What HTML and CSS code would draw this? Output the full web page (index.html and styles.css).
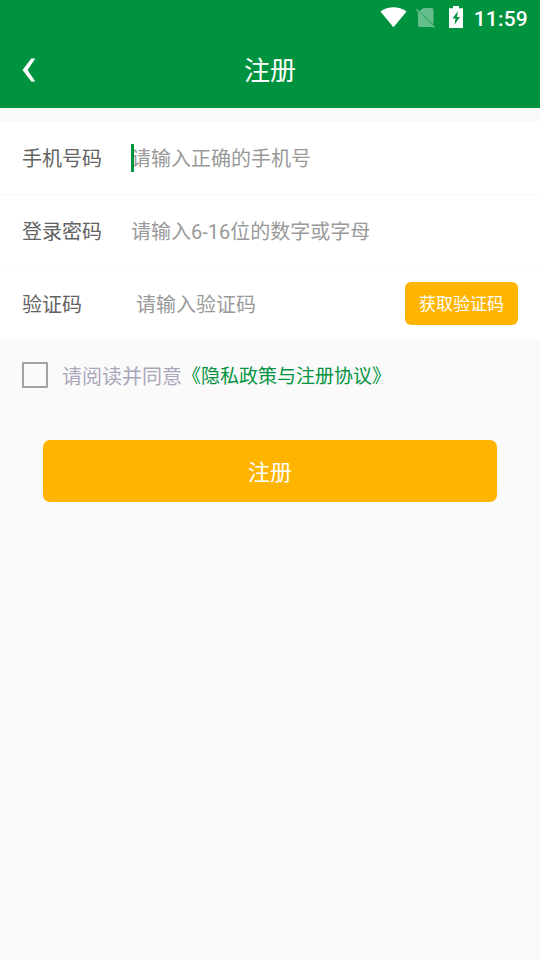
FILE: index.html
```html
<!DOCTYPE html>
<html lang="zh-CN">
<head>
<meta charset="utf-8">
<title>注册</title>
<link rel="stylesheet" href="styles.css">
</head>
<body>
<header class="header">
  <div class="status">
    <svg class="status-icons" width="84" height="26" viewBox="0 0 84 26">
      <path fill="#fff" d="M.4 11.400Q13.500 3 26.600 11.400L13.500 27.200z"/>
      <g opacity=".4">
        <path fill="#fff" d="M43.500 8h8a2 2 0 0 1 2 2v14.500L39.500 11z"/>
        <path fill="#fff" d="M38 11.500L53.500 27H40a2 2 0 0 1-2-2z"/>
        <path stroke="#fff" stroke-width="1.500" d="M36.500 9.500L54.500 27.500"/>
      </g>
      <path fill="#fff" fill-rule="evenodd" d="M73 6h6v2.300h4V28H69V8.300h4zM78 11L72.500 18.600h3L74.500 24.800l5.500-7.800h-3z"/>
    </svg>
    <span class="clock">11:59</span>
  </div>
  <div class="bar">
    <svg class="back" width="16" height="26" viewBox="0 0 16 26">
      <path fill="#fff" d="M10.300 1.500h4L6.600 13l7.700 11.500h-4L1.500 13z"/>
    </svg>
    <h1 class="title">注册</h1>
  </div>
</header>
<main class="form">
  <section class="fields">
    <div class="row"><span class="label">手机号码</span><span class="hint focused">请输入正确的手机号</span></div>
    <div class="row"><span class="label">登录密码</span><span class="hint">请输入6-16位的数字或字母</span></div>
    <div class="row"><span class="label">验证码</span><span class="hint code">请输入验证码</span><button class="get-code">获取验证码</button></div>
  </section>
  <div class="agree"><span class="checkbox"></span><span class="agree-text">请阅读并同意</span><a class="policy">《隐私政策与注册协议》</a></div>
  <button class="submit">注册</button>
</main>
</body>
</html>
```
FILE: styles.css
```css
* { box-sizing: border-box; }
body {
  margin: 0;
  height: 960px;
  overflow: hidden;
  background: #fafafa;
  font-family: Roboto, "Noto Sans CJK SC", sans-serif;
}
button { border: 0; padding: 0; font-family: inherit; color: #fff; background: #ffb400; }
.header { height: 108px; background: #00933f; color: #fff; }
.status {
  height: 36px;
  display: flex;
  justify-content: flex-end;
  padding-right: 12px;
}
.status-icons { overflow: visible; margin-right: 10px; }
.clock { font-size: 21px; font-weight: 500; line-height: 39px; letter-spacing: .2px; }
.bar { height: 68px; display: grid; grid-template-columns: 60px 1fr 60px; align-items: center; }
.back { margin-left: 21px; }
.title { margin: 0; padding-top: 2px; text-align: center; font-size: 26px; font-weight: 400; line-height: 38px; }
.form { padding-top: 14px; }
.fields { background: #fff; }
.row {
  height: 73px;
  display: flex;
  align-items: center;
  padding: 0 22px;
  font-size: 20px;
  line-height: 30px;
  border-bottom: 1px solid #f9f9f9;
}
.label { width: 109px; padding-top: 2px; color: #636363; }
.hint { position: relative; padding-top: 2px; color: #999; }
.focused::before {
  content: "";
  position: absolute;
  left: 0;
  top: 2px;
  width: 3px;
  height: 28px;
  background: #00933f;
}
.code { margin-left: 5px; }
.get-code {
  margin: 0 0 2px auto;
  width: 113px;
  height: 43px;
  padding-bottom: 2px;
  border-radius: 6px;
  font-size: 17px;
}
.agree { height: 70px; display: flex; align-items: center; padding: 0 22px; line-height: 30px; }
.checkbox { width: 26px; height: 26px; margin: 0 14px 2px 0; border: 2px solid #a2a2a2; border-radius: 1px; }
.agree-text { padding-top: 1px; font-size: 20px; color: #aaa7ba; }
.policy { padding-top: 2px; font-size: 19px; color: #00933f; }
.submit { display: block; width: 454px; height: 62px; margin: 29px auto 0; padding-bottom: 2px; border-radius: 7px; font-size: 22px; }
```
